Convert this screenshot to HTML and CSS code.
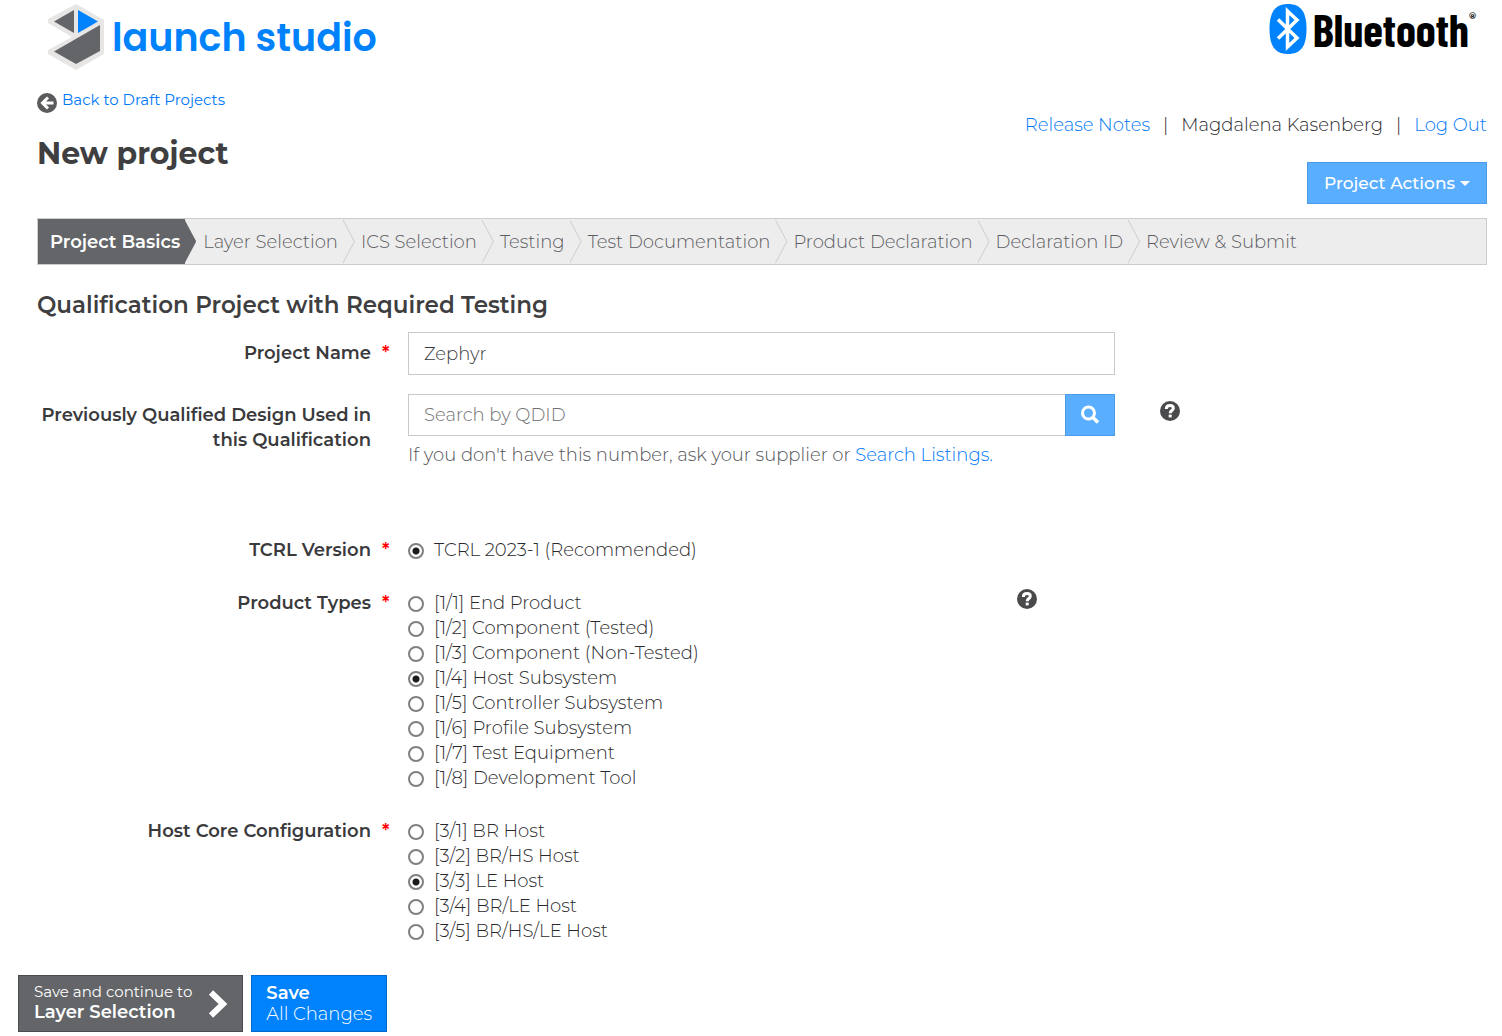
FILE: index.html
```html
<!DOCTYPE html>
<html lang="en">
<head>
<meta charset="utf-8">
<title>Launch Studio - New project</title>
<meta name="viewport" content="width=device-width, initial-scale=1">
<link rel="stylesheet" href="styles.css">
</head>
<body>
<svg class="sprite" aria-hidden="true">
  <symbol id="help" viewBox="0 0 20 20">
    <circle cx="10" cy="10" r="10" fill="#4a4a4c"/>
    <path d="M6.300 8 C6.300 5.200 8 4.500 10 4.500 C12.200 4.500 13.300 5.500 13.300 7.200 C13.300 9.600 10.200 9.500 10.200 12.300" fill="none" stroke="#fff" stroke-width="3"/>
    <path d="M8.700 13.600h3v2.800h-3z" fill="#fff"/>
  </symbol>
</svg>
<header class="masthead">
  <a class="brand" href="#" aria-label="launch studio">
    <svg width="56" height="66" viewBox="0 0 56 66" aria-hidden="true">
      <path d="M28 0 56 16V50L28 66 0 50V46L24 33 0 19V15Z" fill="#e8e6e4"/>
      <path d="M26 6V29L6 17.500Z" fill="#636569"/>
      <path d="M30 6V29L50 17.500Z" fill="#0082fc"/>
      <path d="M52 21V47L28 60 6 47.500Z" fill="#636569"/>
    </svg>
    <span class="brand-name">launch studio</span>
  </a>
  <a class="bluetooth" href="#">
    <svg width="38" height="50" viewBox="0 0 38 50" aria-hidden="true">
      <path d="M19 0C32 0 37.500 8 37.500 25S32 50 19 50 .5 42 .5 25 6 0 19 0Z" fill="#0082fc"/>
      <path d="M9 15.500 28 34 18.500 43V7L28 16 9 34.500" fill="none" stroke="#fff" stroke-width="3.500"/>
    </svg>
    <span class="bluetooth-name">Bluetooth</span><sup class="reg">®</sup>
  </a>
</header>

<div class="page">
  <div class="top">
    <div>
      <a class="back" href="#">
        <svg width="20" height="20" viewBox="0 0 20 20" aria-hidden="true">
          <circle cx="10" cy="10" r="10" fill="#5b5b5d"/>
          <path d="M11 4.500 5.500 10 11 15.500M6 10H16.500" fill="none" stroke="#fff" stroke-width="3"/>
        </svg>
        <span>Back to Draft Projects</span>
      </a>
      <h1>New project</h1>
    </div>
    <div class="account">
      <div class="links">
        <a href="#">Release Notes</a><span>|</span><span>Magdalena Kasenberg</span><span>|</span><a href="#">Log Out</a>
      </div>
      <button class="actions" type="button">Project Actions <i class="caret"></i></button>
    </div>
  </div>

  <nav class="steps" aria-label="Project steps">
    <a class="step current" href="#">Project Basics</a>
    <a class="step" href="#">Layer Selection</a>
    <a class="step" href="#">ICS Selection</a>
    <a class="step" href="#">Testing</a>
    <a class="step" href="#">Test Documentation</a>
    <a class="step" href="#">Product Declaration</a>
    <a class="step" href="#">Declaration ID</a>
    <a class="step" href="#">Review &amp; Submit</a>
  </nav>

  <form id="project">
    <h2>Qualification Project with Required Testing</h2>
    <div class="row boxed">
      <label class="label" for="name">Project Name</label><span class="star">*</span>
      <input class="text" id="name" type="text" value="Zephyr">
    </div>
    <div class="row boxed qdid">
      <label class="label" for="qdid">Previously Qualified Design Used in this Qualification</label><span></span>
      <div>
        <div class="search">
          <input class="text" id="qdid" type="text" placeholder="Search by QDID">
          <button type="button" aria-label="Search">
            <svg width="20" height="20" viewBox="0 0 20 20" aria-hidden="true"><circle cx="8.500" cy="8" r="6" fill="none" stroke="#fff" stroke-width="3"/><path d="M12.500 12 18 17.500" stroke="#fff" stroke-width="3.500"/></svg>
          </button>
        </div>
        <p class="hint">If you don't have this number, ask your supplier or <a href="#">Search Listings.</a></p>
      </div>
      <svg class="help" role="img" aria-label="Help"><use href="#help"/></svg>
    </div>
    <div class="row" role="radiogroup" aria-labelledby="tcrl">
      <span class="label" id="tcrl">TCRL Version</span><span class="star">*</span>
      <div><label class="option"><input type="radio" name="tcrl" checked>TCRL 2023-1 (Recommended)</label></div>
    </div>
    <div class="row" role="radiogroup" aria-labelledby="types">
      <span class="label" id="types">Product Types</span><span class="star">*</span>
      <div class="with-help">
        <div>
          <label class="option"><input type="radio" name="type">[1/1] End Product</label>
          <label class="option"><input type="radio" name="type">[1/2] Component (Tested)</label>
          <label class="option"><input type="radio" name="type">[1/3] Component (Non-Tested)</label>
          <label class="option"><input type="radio" name="type" checked>[1/4] Host Subsystem</label>
          <label class="option"><input type="radio" name="type">[1/5] Controller Subsystem</label>
          <label class="option"><input type="radio" name="type">[1/6] Profile Subsystem</label>
          <label class="option"><input type="radio" name="type">[1/7] Test Equipment</label>
          <label class="option"><input type="radio" name="type">[1/8] Development Tool</label>
        </div>
        <svg class="help" role="img" aria-label="Help"><use href="#help"/></svg>
      </div>
    </div>
    <div class="row" role="radiogroup" aria-labelledby="host">
      <span class="label" id="host">Host Core Configuration</span><span class="star">*</span>
      <div>
        <label class="option"><input type="radio" name="host">[3/1] BR Host</label>
        <label class="option"><input type="radio" name="host">[3/2] BR/HS Host</label>
        <label class="option"><input type="radio" name="host" checked>[3/3] LE Host</label>
        <label class="option"><input type="radio" name="host">[3/4] BR/LE Host</label>
        <label class="option"><input type="radio" name="host">[3/5] BR/HS/LE Host</label>
      </div>
    </div>
  </form>
</div>

<footer class="footer">
  <button class="big next" type="submit" form="project">
    <span><small>Save and continue to</small><b>Layer Selection</b></span>
    <svg width="20" height="28" viewBox="0 0 20 28" aria-hidden="true"><path d="M3 2.500 15 14 3 25.500" fill="none" stroke="#fff" stroke-width="6"/></svg>
  </button>
  <button class="big save" type="submit" form="project"><span><b>Save</b><span>All Changes</span></span></button>
</footer>
</body>
</html>
```
FILE: styles.css
```css
* { box-sizing: border-box; }

body {
  margin: 0;
  background: #fff;
  color: #29292b;
  font: 300 18px/25px Montserrat, Inter, sans-serif;
}

a { color: #0078f8; text-decoration: none; }
button, input { font: inherit; }
button { cursor: pointer; }
.sprite { position: absolute; width: 0; height: 0; }

.masthead {
  display: flex;
  justify-content: space-between;
  align-items: flex-start;
  padding: 4px 26px 0 48px;
}

.brand, .bluetooth { display: flex; }
.brand { gap: 8px; height: 66px; color: #0082fc; }
.brand-name { font: 600 38px/68px Poppins, Lato, sans-serif; }
.bluetooth { gap: 6px; color: #000; }
.bluetooth-name { font: 700 45px/50px "Barlow Condensed", "Fjalla One", "Roboto Condensed", "Liberation Sans", sans-serif; }
.reg { margin: 4px 0 0 -6px; font-size: 9px; line-height: 16px; font-weight: 700; }

.page { padding: 0 15px 0 37px; }

.top { display: flex; justify-content: space-between; padding-top: 18px; }
.back { display: flex; gap: 5px; align-items: flex-end; height: 25px; font-size: 15px; line-height: 26px; font-weight: 400; }
.back svg { flex: none; }
h1 { margin: 21px 0 0; color: #3f3f41; font-size: 30px; line-height: 40px; font-weight: 700; }

.account { display: flex; flex-direction: column; align-items: flex-end; gap: 24px; padding-top: 25px; }
.links { display: flex; gap: 13px; }

.actions {
  display: flex;
  align-items: center;
  gap: 5px;
  height: 42px;
  padding: 0 16px;
  border: 1px solid #4b9be8;
  background: #5aaeff;
  color: #fff;
  font-size: 17px;
  font-weight: 500;
}
.caret { border: 5px solid transparent; border-top-color: #fff; border-bottom: 0; }

.steps {
  display: flex;
  height: 47px;
  margin-top: 14px;
  border: 1px solid #ccccca;
  background: #ededed;
}
.step {
  position: relative;
  flex: none;
  padding: 0 5px 0 18px;
  color: #5c5c5f;
  line-height: 46px;
}
.step::after {
  content: "";
  position: absolute;
  z-index: 1;
  top: 0;
  left: 100%;
  width: 12px;
  height: 45px;
  background: #ccccca;
  clip-path: polygon(0 0, 12px 50%, 0 100%, 0 96%, 11px 50%, 0 4%);
}
.step:last-child::after { content: none; }
.step.current { padding: 0 5px 0 12px; background: #636569; color: #fff; font-weight: 600; }
.step.current::after { left: calc(100% - 1px); background: #636569; clip-path: polygon(0 0, 100% 50%, 0 100%); }

h2 { margin: 24px 0 11px; color: #3f3f41; font-size: 23px; line-height: 32px; font-weight: 600; }

.row {
  display: grid;
  grid-template-columns: 334fr 37px 707fr 372fr;
  align-items: start;
  margin-bottom: 28px;
}
.row.boxed { margin-bottom: 19px; }
.boxed .label, .boxed .star { padding-top: 9px; }
.row.qdid { margin-bottom: 70px; }

.label { color: #3a3a3c; font-weight: 600; text-align: right; }
.star { padding-left: 11px; color: #f00; font-weight: 600; }

.text {
  width: 100%;
  height: 43px;
  padding: 0 15px;
  border: 1px solid #c9c9c9;
  background: #fff;
  color: #38383a;
}
.text::placeholder { color: #707072; opacity: 1; }
.search { display: flex; }
.search .text { height: 42px; border-right: 0; }
.search button {
  display: grid;
  place-items: center;
  flex: none;
  width: 50px;
  padding: 0;
  border: 1px solid #4b9be8;
  background: #5aaeff;
}
.hint { margin: 7px 0 0; color: #535356; }

.help { width: 20px; height: 20px; }
.qdid .help { margin: 7px 0 0 45px; }
.with-help { display: flex; justify-content: space-between; padding-right: 78px; }
.with-help .help { margin-top: -2px; }

.option { display: flex; align-items: center; gap: 10px; }
.option input {
  appearance: none;
  flex: none;
  width: 16px;
  height: 16px;
  margin: 0;
  border: 2px solid #808082;
  border-radius: 50%;
}
.option input:checked { background: radial-gradient(circle, #1c1c1c 3px, #fff 4px); }

.footer { display: flex; gap: 8px; padding: 3px 18px 4px; }
.big {
  display: flex;
  align-items: center;
  height: 57px;
  padding: 0 15px;
  color: #fff;
  line-height: 20px;
  text-align: left;
}
.big span, .big small, .big b { display: block; }
.big small { font-size: 15px; font-weight: 400; }
.big b { font-weight: 600; }
.next { gap: 16px; padding-right: 14px; border: 1px solid #4a4b4e; background: #636569; }
.next span { padding-bottom: 4px; }
.save { padding: 0 14px; border: 1px solid #0068ca; background: #0082fc; line-height: 21px; }
```
